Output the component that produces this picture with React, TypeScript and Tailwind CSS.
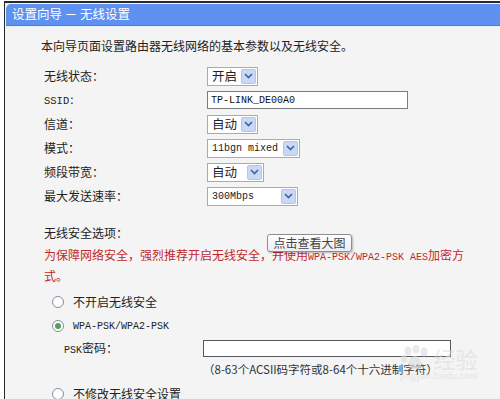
import React from "react";

const cjk = "font-['Noto_Sans_CJK_SC','Noto_Sans',sans-serif]";
const mono = "font-['Liberation_Mono','Noto_Sans_CJK_SC',monospace]";

function Arrow() {
  return (
    <span className="ml-auto flex h-[15px] w-[15px] items-center justify-center rounded-[2px] border border-[#b3c6ea] bg-[#c9d9f5]">
      <svg width="9" height="6" viewBox="0 0 9 6">
        <path d="M1 1 L4.5 4.6 L8 1" fill="none" stroke="#46639a" strokeWidth="1.7" />
      </svg>
    </span>
  );
}

function Select({ className, children }: { className: string; children: React.ReactNode }) {
  return (
    <div className={`flex h-[19px] items-center border border-[#a9abae] bg-white pl-[4px] pr-[1px] ${className}`}>
      {children}
      <Arrow />
    </div>
  );
}

function Radio({ checked }: { checked?: boolean }) {
  return (
    <span className="flex h-[12px] w-[12px] items-center justify-center rounded-full border border-[#7f8f9c] bg-white">
      {checked && <span className="h-[6px] w-[6px] rounded-full bg-[#5a9a5a]" />}
    </span>
  );
}

function Row({ label, children }: { label: React.ReactNode; children: React.ReactNode }) {
  return (
    <div className="flex h-[24px] items-center">
      <div className="w-[163px] text-[12px] text-[#222]">{label}</div>
      {children}
    </div>
  );
}

export default function App() {
  return (
    <div className={`relative h-[399px] w-[500px] overflow-hidden bg-white ${cjk}`}>
      <div className="ml-[4px] mt-[1px] h-[400px] border-l-[1.5px] border-t-2 border-[#2a2a2a] bg-[#f4f4f4] pl-[1px] pt-[1px]">
        <div className="flex h-[22px] items-center rounded-tl-[5px] border-b border-[#4f7fd8] bg-[#5f91f1] pl-[6px] text-[12.5px] text-white">
          设置向导 － 无线设置
        </div>
        <div className="h-[1px] bg-[#e4f3fb]" />
        <div className="pl-[38px] text-[#222]">
          <div className="mt-[10px] flex h-[18px] items-center text-[12px]">
            <span className="-ml-[3px]">本向导页面设置路由器无线网络的基本参数以及无线安全。</span>
          </div>
          <div className="mt-[9px]">
            <Row label="无线状态：">
              <Select className="w-[51px]">
                <span className="text-[12.5px]">开启</span>
              </Select>
            </Row>
            <Row label={<span className={`${mono} text-[10.5px]`}>SSID：</span>}>
              <div className={`flex h-[18px] w-[201px] items-center border border-[#7a7d80] bg-white pl-[3px] ${mono} text-[10px] text-[#111]`}>
                TP-LINK_DE00A0
              </div>
            </Row>
            <Row label="信道：">
              <Select className="w-[51px]">
                <span className="text-[12.5px]">自动</span>
              </Select>
            </Row>
            <Row label="模式：">
              <Select className="w-[93px]">
                <span className={`${mono} text-[10px]`}>11bgn mixed</span>
              </Select>
            </Row>
            <Row label="频段带宽：">
              <Select className="w-[57px]">
                <span className="text-[12.5px]">自动</span>
              </Select>
            </Row>
            <Row label="最大发送速率：">
              <Select className="w-[91px]">
                <span className={`${mono} text-[10px]`}>300Mbps</span>
              </Select>
            </Row>
          </div>
          <div className="mt-[16px] flex h-[18px] items-center text-[12px]">无线安全选项：</div>
          <div className="mt-[4px] pr-[20px] text-[12px] leading-[18px] text-[#c0282c]">
            为保障网络安全，强烈推荐开启无线安全，并使用
            <span className={`${mono} text-[10px]`}>WPA-PSK/WPA2-PSK AES</span>
            加密方式。
          </div>
          <div className="mt-[5px] flex h-[24px] items-center pl-[8px] text-[12px]">
            <Radio />
            <span className="ml-[9px]">不开启无线安全</span>
          </div>
          <div className="flex h-[24px] items-center pl-[8px]">
            <Radio checked />
            <span className={`ml-[9px] ${mono} text-[10px]`}>WPA-PSK/WPA2-PSK</span>
          </div>
          <div className="flex h-[20px] items-center pl-[20px]">
            <div className="w-[139px] text-[12px]">
              <span className={`${mono} text-[10px]`}>PSK</span>密码：
            </div>
            <div className="h-[17px] w-[248px] border border-[#55585c] bg-white" />
          </div>
          <div className="flex h-[24px] items-center pl-[159px] text-[11.5px] text-[#333]">
            （8-63个ACSII码字符或8-64个十六进制字符）
          </div>
          <div className="flex h-[24px] items-center pl-[8px] text-[12px]">
            <Radio />
            <span className="ml-[9px]">不修改无线安全设置</span>
          </div>
        </div>
      </div>

      <div className="absolute left-[267px] top-[234px] flex h-[18px] w-[85px] items-center justify-center rounded-[3px] border border-[#8e8e8e] bg-gradient-to-b from-white to-[#ececf2] text-[12px] text-[#444] shadow-[1px_1px_2px_rgba(0,0,0,0.25)]">
        点击查看大图
      </div>

      <div className="pointer-events-none absolute left-[400px] top-[345px] flex flex-col items-center opacity-60">
        <div className="flex items-center gap-[3px]">
          <svg width="30" height="26" viewBox="0 0 30 26" fill="#dcdcdc">
            <ellipse cx="8" cy="6" rx="3.5" ry="4.5" />
            <ellipse cx="16" cy="4" rx="3.5" ry="4.5" />
            <ellipse cx="24" cy="7" rx="3.5" ry="4.5" />
            <ellipse cx="4" cy="14" rx="3" ry="4" />
            <path d="M15 11 C10 11 7 19 9 22 C11 25 19 25 21 22 C23 19 20 11 15 11 Z" />
          </svg>
          <span className="text-[22px] leading-none text-[#dcdcdc]">经验</span>
        </div>
        <span className="text-[9px] leading-none text-[#dcdcdc]">jingyan.baidu.com</span>
      </div>
    </div>
  );
}
